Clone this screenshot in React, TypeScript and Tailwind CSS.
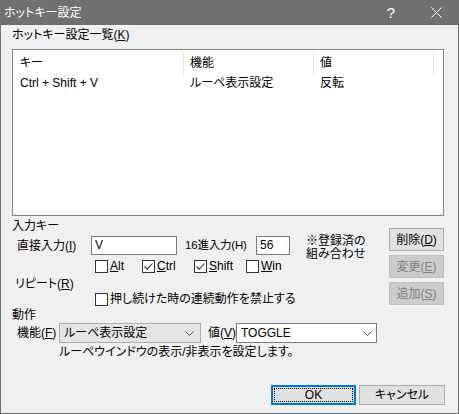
import React from 'react'

const FONT = "font-['Liberation_Sans','Noto_Sans_CJK_JP',sans-serif] [font-feature-settings:'palt']"

function Box({ checked }: { checked?: boolean }) {
  return (
    <div className="w-[13px] h-[13px] border border-[#333] bg-white flex items-center justify-center shrink-0">
      {checked && (
        <svg width="11" height="11" viewBox="0 0 11 11">
          <path d="M1.5 5.5 L4.2 8.2 L9.5 2.5" fill="none" stroke="#333" strokeWidth="1.1" />
        </svg>
      )}
    </div>
  )
}

function Check({ checked, u, rest, w }: { checked?: boolean; u: string; rest: string; w: string }) {
  return (
    <div className={`flex items-center gap-[2px] ${w}`}>
      <Box checked={checked} />
      <span className="leading-[13px]"><span className="underline underline-offset-1">{u}</span>{rest}</span>
    </div>
  )
}

function Chevron() {
  return (
    <svg width="9" height="5" viewBox="0 0 9 5" className="shrink-0">
      <path d="M0.5 0.5 L4.5 4.5 L8.5 0.5" fill="none" stroke="#555" strokeWidth="1" />
    </svg>
  )
}

function SideBtn({ label, u, disabled }: { label: string; u: string; disabled?: boolean }) {
  return (
    <div
      className={`w-[55px] h-[23px] flex items-center justify-center border ${
        disabled ? 'bg-[#cccccc] border-[#bfbfbf] text-[#838383]' : 'bg-[#e1e1e1] border-[#adadad] text-black'
      }`}
    >
      {label}(<span className="underline underline-offset-1">{u}</span>)
    </div>
  )
}

export default function App() {
  return (
    <div className={`w-[459px] h-[414px] flex flex-col bg-[#f0f0f0] text-[12px] text-black ${FONT}`}>
      {/* title bar */}
      <div className="h-[25px] bg-[#707070] flex items-center text-white shrink-0">
        <span className="ml-[4px] leading-[14px]">ホットキー設定</span>
        <span className="ml-auto mr-[36px] text-[15px] leading-[15px]">?</span>
        <svg width="11" height="11" viewBox="0 0 11 11" className="mr-[17px]">
          <path d="M0.5 0.5 L10.5 10.5 M10.5 0.5 L0.5 10.5" stroke="#fff" strokeWidth="1" />
        </svg>
      </div>

      <div className="flex-1 border-x border-b border-[#707070] pl-[11px] flex flex-col">
        <div className="mt-[3px] h-[14px] leading-[14px]">
          ホットキー設定一覧(<span className="underline underline-offset-1">K</span>)
        </div>

        <div className="mt-[7px] w-[432px] h-[167px] border border-[#828282] bg-white">
          <div className="h-[26px] flex items-center">
            <div className="w-[171px] h-[24px] pl-[7px] flex items-center border-r border-[#e5e5e5]">キー</div>
            <div className="w-[130px] h-[24px] pl-[6px] flex items-center border-r border-[#e5e5e5]">機能</div>
            <div className="w-[120px] h-[24px] pl-[6px] flex items-center border-r border-[#e5e5e5]">値</div>
          </div>
          <div className="h-[14px] flex items-center leading-[14px]">
            <div className="w-[171px] pl-[7px]">Ctrl + Shift + V</div>
            <div className="w-[130px] pl-[6px]">ルーペ表示設定</div>
            <div className="w-[120px] pl-[6px]">反転</div>
          </div>
        </div>

        <div className="flex items-start">
          <div className="flex flex-col">
            <div className="mt-[3px] h-[14px] leading-[14px]">入力キー</div>

            <div className="mt-[3px] h-[19px] flex items-center">
              <div className="ml-[5px] w-[74px]">
                直接入力(<span className="underline underline-offset-1">I</span>)
              </div>
              <div className="w-[86px] h-[19px] border border-[#7a7a7a] bg-white pl-[3px] leading-[17px]">V</div>
              <div className="ml-[8px] w-[71px] text-[11.5px] tracking-[-0.2px]">16進入力(H)</div>
              <div className="w-[34px] h-[19px] border border-[#7a7a7a] bg-white pl-[3px] leading-[17px]">56</div>
              <div className="ml-[16px] self-start mt-[-1px] h-[19px] flex flex-col gap-[1px]">
                <div className="leading-[12px] h-[12px]">※登録済の</div>
                <div className="leading-[12px] h-[12px]">組み合わせ</div>
              </div>
            </div>

            <div className="mt-[5px] h-[13px] ml-[83px] flex items-center">
              <Check u="A" rest="lt" w="w-[47px]" />
              <Check checked u="C" rest="trl" w="w-[52px]" />
              <Check checked u="S" rest="hift" w="w-[52px]" />
              <Check u="W" rest="in" w="w-[40px]" />
            </div>

            <div className="mt-[4px] ml-[3px] h-[14px] leading-[14px]">
              リピート(<span className="underline underline-offset-1">R</span>)
            </div>

            <div className="mt-[2px] ml-[83px] h-[13px] flex items-center gap-[2px]">
              <Box />
              <span className="leading-[13px]">押し続けた時の連続動作を禁止する</span>
            </div>

            <div className="mt-[2px] h-[14px] leading-[14px]">動作</div>
          </div>

          <div className="ml-auto mr-[14px] mt-[12px] flex flex-col gap-[4px]">
            <SideBtn label="削除" u="D" />
            <SideBtn label="変更" u="E" disabled />
            <SideBtn label="追加" u="S" disabled />
          </div>
        </div>

        <div className="mt-[1px] h-[20px] flex items-center">
          <div className="ml-[5px] w-[42px]">
            機能(<span className="underline underline-offset-1">F</span>)
          </div>
          <div className="w-[142px] h-[20px] border border-[#adadad] bg-[#e5e5e5] flex items-center pl-[4px] pr-[6px]">
            <span className="flex-1 leading-[14px]">ルーペ表示設定</span>
            <Chevron />
          </div>
          <div className="ml-[7px] w-[28px]">
            値(<span className="underline underline-offset-1">V</span>)
          </div>
          <div className="w-[141px] h-[20px] border border-[#7a7a7a] bg-white flex items-center pl-[4px] pr-[4px]">
            <span className="flex-1 leading-[14px]">TOGGLE</span>
            <Chevron />
          </div>
        </div>

        <div className="mt-[2px] ml-[47px] h-[14px] leading-[14px]">ルーペウインドウの表示/非表示を設定します。</div>

        <div className="mt-[26px] mr-[13px] flex justify-end gap-[3px]">
          <div className="w-[85px] h-[20px] border-2 border-[#0078d7] bg-[#e1e1e1] p-[1px]">
            <div className="w-full h-full border border-dotted border-black flex items-center justify-center leading-[14px]">
              OK
            </div>
          </div>
          <div className="w-[86px] h-[20px] border border-[#adadad] bg-[#e1e1e1] flex items-center justify-center leading-[14px]">
            キャンセル
          </div>
        </div>
      </div>
    </div>
  )
}
